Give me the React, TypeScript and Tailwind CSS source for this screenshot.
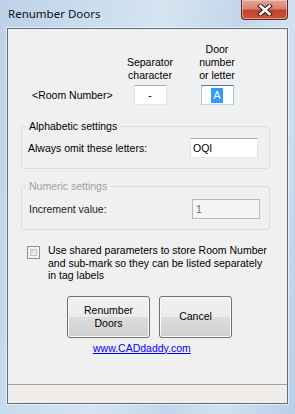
import React from 'react'

const ui = { fontFamily: '"Liberation Sans", Arial, sans-serif' }

function TextBox({ value, kind = 'normal', center = false, className = '' }: { value: string; kind?: 'normal' | 'focus' | 'disabled'; center?: boolean; className?: string }) {
  const look =
    kind === 'focus'
      ? 'border-t-[#3d7bad] border-x-[#a4c9e3] border-b-[#b7d9ed] bg-white text-black'
      : kind === 'disabled'
        ? 'border-[#b7babc] bg-[#f4f4f4] text-[#6d6d6d]'
        : 'border-t-[#abadb3] border-x-[#e2e3ea] border-b-[#e3e9ef] bg-white text-black'
  return (
    <div className={`h-[20px] border flex items-center text-[10.5px] leading-[13px] ${center ? 'justify-center' : 'pl-[2px]'} ${look} ${className}`}>
      {kind === 'focus' ? <span className="bg-[#3399ff] text-white px-[2px] leading-[15px]">{value}</span> : value}
    </div>
  )
}

function WinButton({ children, className = '' }: { children: React.ReactNode; className?: string }) {
  return (
    <button className={`h-[42px] rounded-[3px] border border-[#707070] bg-[linear-gradient(to_bottom,#f2f2f2_0%,#ebebeb_50%,#dddddd_50%,#cfcfcf_100%)] shadow-[inset_0_0_0_1px_#fbfbfb] text-[10.5px] leading-[13px] text-black flex flex-col items-center justify-center ${className}`}>
      {children}
    </button>
  )
}

export default function App() {
  return (
    <div
      className="w-[295px] h-[414px] overflow-hidden flex flex-col bg-[linear-gradient(100deg,#bdd2e8_0%,#cadcee_25%,#d6e4f1_45%,#c3d7ea_65%,#d2e1ef_80%,#b9cfe6_100%)]"
      style={ui}
    >
      {/* title bar */}
      <div className="h-[28px] flex items-start shrink-0">
        <span className="pl-[8px] pt-[6px] text-[11.5px] leading-[16px] text-[#111]" style={{ fontFamily: '"Noto Sans", "Open Sans", sans-serif' }}>
          Renumber Doors
        </span>
        <div className="ml-auto mr-[7px] w-[47px] h-[20px] rounded-b-[4px] border border-t-0 border-[#5c2a25] bg-[linear-gradient(to_bottom,#e4a597_0%,#d88270_45%,#c2432c_55%,#c9553b_100%)] shadow-[inset_0_0_0_1px_rgba(255,220,210,0.5)] flex items-center justify-center">
          <svg width="16" height="12" viewBox="0 0 16 12">
            <path d="M3.5 2 L12.5 10 M12.5 2 L3.5 10" stroke="#3a1a16" strokeWidth="4.6" strokeLinecap="square" />
            <path d="M3.5 2 L12.5 10 M12.5 2 L3.5 10" stroke="#ffffff" strokeWidth="2.6" strokeLinecap="square" />
          </svg>
        </div>
      </div>

      {/* client area */}
      <div className="mx-[7px] h-[376px] border border-[#5f6c79] bg-[#f0f0f0] flex flex-col shadow-[0_0_0_1px_rgba(255,255,255,0.55)]">
        <div className="flex-1 flex flex-col text-[10.5px] leading-[13px] text-black">
          {/* room number row */}
          <div className="pt-[14px] grid grid-cols-[109px_66px_68px] items-end">
            <div />
            <div className="text-center">Separator<br />character</div>
            <div className="text-center">Door<br />number<br />or letter</div>
            <div className="pl-[24px] self-center mt-[3px]">&lt;Room Number&gt;</div>
            <div className="flex justify-center mt-[3px]"><TextBox value="-" center className="w-[33px]" /></div>
            <div className="flex justify-center mt-[3px]"><TextBox value="A" kind="focus" center className="w-[33px]" /></div>
          </div>

          {/* alphabetic settings */}
          <fieldset className="ml-[13px] w-[249px] mt-[15px] border border-[#d5dfe5] rounded-[3px] px-[6px] pt-[5px] pb-[10px]">
            <legend className="-ml-[2px] px-[3px]">Alphabetic settings</legend>
            <div className="flex items-center justify-between pr-[5px]">
              <span>Always omit these letters:</span>
              <TextBox value="OQI" className="w-[68px]" />
            </div>
          </fieldset>

          {/* numeric settings (disabled) */}
          <fieldset className="ml-[13px] w-[249px] mt-[11px] border border-[#d5dfe5] rounded-[3px] px-[6px] pt-[6px] pb-[10px]">
            <legend className="-ml-[2px] px-[3px] text-[#a0a0a0]">Numeric settings</legend>
            <div className="flex items-center justify-between pl-[1px] pr-[3px]">
              <span className="text-[#222]">Increment value:</span>
              <TextBox value="1" kind="disabled" className="w-[68px] pl-[3px]" />
            </div>
          </fieldset>

          {/* checkbox */}
          <div className="mt-[14px] pl-[19px] flex items-start gap-[8px]">
            <div className="mt-[2px] w-[13px] h-[13px] shrink-0 border border-[#8e8f8f] bg-[#f4f4f4] p-[2px]">
              <div className="w-full h-full border border-[#c0c3c8] bg-[linear-gradient(135deg,#cfd2d6_0%,#e8eaed_60%,#f8f8f8_100%)]" />
            </div>
            <p className="leading-[12.5px]">
              Use shared parameters to store Room Number<br />
              and sub-mark so they can be listed separately<br />
              in tag labels
            </p>
          </div>

          {/* buttons */}
          <div className="mt-[14px] pl-[59px] flex gap-[9px]">
            <WinButton className="w-[83px]">Renumber<br />Doors</WinButton>
            <WinButton className="w-[73px]">Cancel</WinButton>
          </div>

          <div className="mt-[4px] pl-[85px]">
            <a className="text-[#0000ff] underline">www.CADdaddy.com</a>
          </div>
        </div>

        {/* status bar */}
        <div className="h-[19px] shrink-0 border-t border-[#a0a0a0] bg-[#f0edeb]" />
      </div>
    </div>
  )
}
